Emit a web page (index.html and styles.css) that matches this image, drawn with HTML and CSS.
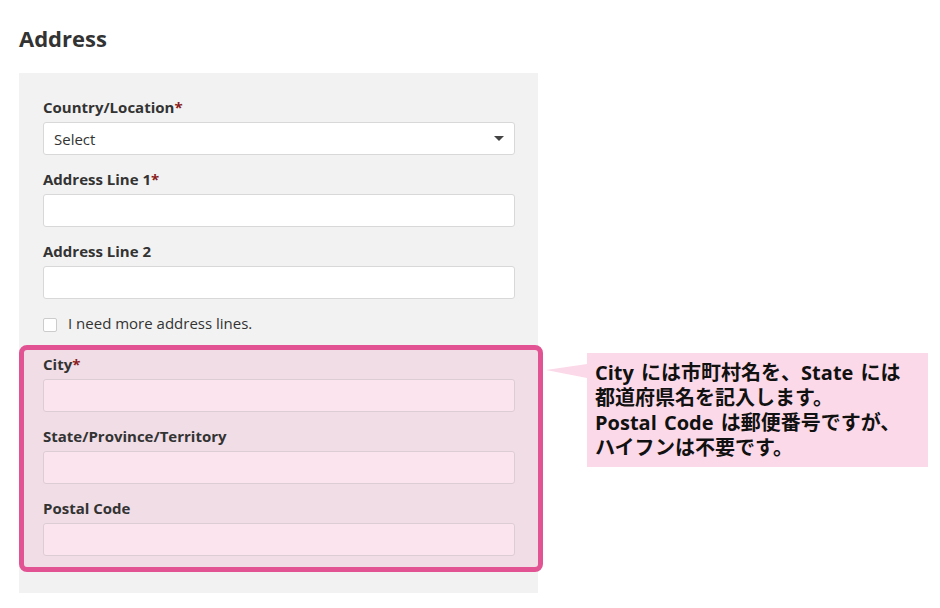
FILE: index.html
```html
<!DOCTYPE html>
<html lang="ja">
<head>
<meta charset="utf-8">
<title>Address</title>
<link rel="stylesheet" href="styles.css">
</head>
<body>
<div class="page">
  <h1 class="title">Address</h1>
  <div class="panel">
    <div class="field">
      <label class="label">Country/Location<span class="req">*</span></label>
      <div class="input select">
        <span class="select-text">Select</span>
        <svg class="caret" width="10" height="5" viewBox="0 0 10 5"><polygon points="0,0 10,0 5,5" fill="#444"/></svg>
      </div>
    </div>
    <div class="field">
      <label class="label">Address Line 1<span class="req">*</span></label>
      <div class="input"></div>
    </div>
    <div class="field">
      <label class="label">Address Line 2</label>
      <div class="input"></div>
    </div>
    <div class="check-row">
      <span class="checkbox"></span>
      <span class="check-text">I need more address lines.</span>
    </div>
    <div class="highlight">
      <div class="field">
        <label class="label">City<span class="req">*</span></label>
        <div class="input pink"></div>
      </div>
      <div class="field">
        <label class="label">State/Province/Territory</label>
        <div class="input pink"></div>
      </div>
      <div class="field">
        <label class="label">Postal Code</label>
        <div class="input pink"></div>
      </div>
    </div>
  </div>
  <div class="callout">
    <svg class="pointer" width="41" height="30" viewBox="0 0 41 30"><polygon points="0,17 41,11 41,25" fill="#fbd9e8"/></svg>
    <p class="callout-text">City には市町村名を、State には<br>都道府県名を記入します。<br>Postal Code は郵便番号ですが、<br>ハイフンは不要です。</p>
  </div>
</div>
</body>
</html>
```

FILE: styles.css
```css
html, body {
  margin: 0;
  padding: 0;
  background: #ffffff;
}

body {
  font-family: "Open Sans", "Liberation Sans", sans-serif;
  color: #333333;
}

.page {
  position: relative;
  width: 940px;
  height: 608px;
  padding-left: 19px;
  box-sizing: border-box;
}

.title {
  margin: 0;
  padding-top: 23px;
  font-size: 22px;
  line-height: 30px;
  font-weight: 700;
  color: #333333;
}

.panel {
  margin-top: 20px;
  width: 519px;
  box-sizing: border-box;
  background: #f2f2f2;
  padding: 24px 23px 21px 24px;
}

.field + .field {
  margin-top: 14px;
}

.label {
  display: block;
  font-size: 15px;
  line-height: 20px;
  font-weight: 700;
  color: #333333;
  margin-bottom: 5px;
}

.req {
  color: #8a1c1c;
}

.input {
  height: 33px;
  box-sizing: border-box;
  background: #ffffff;
  border: 1px solid #d8d8d8;
  border-radius: 3px;
}

.select {
  display: flex;
  align-items: center;
  justify-content: space-between;
  padding: 0 10px 0 10px;
}

.select-text {
  font-size: 15px;
  color: #333333;
}

.caret {
  display: block;
}

.check-row {
  display: flex;
  align-items: flex-start;
  margin-top: 14px;
  height: 20px;
}

.checkbox {
  width: 14px;
  height: 14px;
  box-sizing: border-box;
  margin-top: 5px;
  background: #ffffff;
  border: 1px solid #cccccc;
  border-radius: 2px;
}

.check-text {
  margin-left: 11px;
  font-size: 15px;
  line-height: 20px;
  color: #333333;
}

.highlight {
  margin: 12px -28px 0 -24px;
  padding: 4px 23px 11px 19px;
  border: 5px solid #e15393;
  border-radius: 8px;
  background: #f0dde6;
}

.input.pink {
  background: #fce4ef;
  border-color: #dccdd4;
}

.callout {
  position: absolute;
  left: 587px;
  top: 353px;
  width: 341px;
  height: 114px;
  box-sizing: border-box;
  background: #fbd9e8;
  padding: 7px 8px;
}

.pointer {
  position: absolute;
  left: -41px;
  top: 0;
  display: block;
}

.callout-text {
  margin: 0;
  font-family: "Open Sans", "Noto Sans CJK JP", sans-serif;
  font-weight: 700;
  font-size: 20px;
  line-height: 25px;
  word-spacing: 2px;
  color: #111111;
  white-space: nowrap;
}
```
